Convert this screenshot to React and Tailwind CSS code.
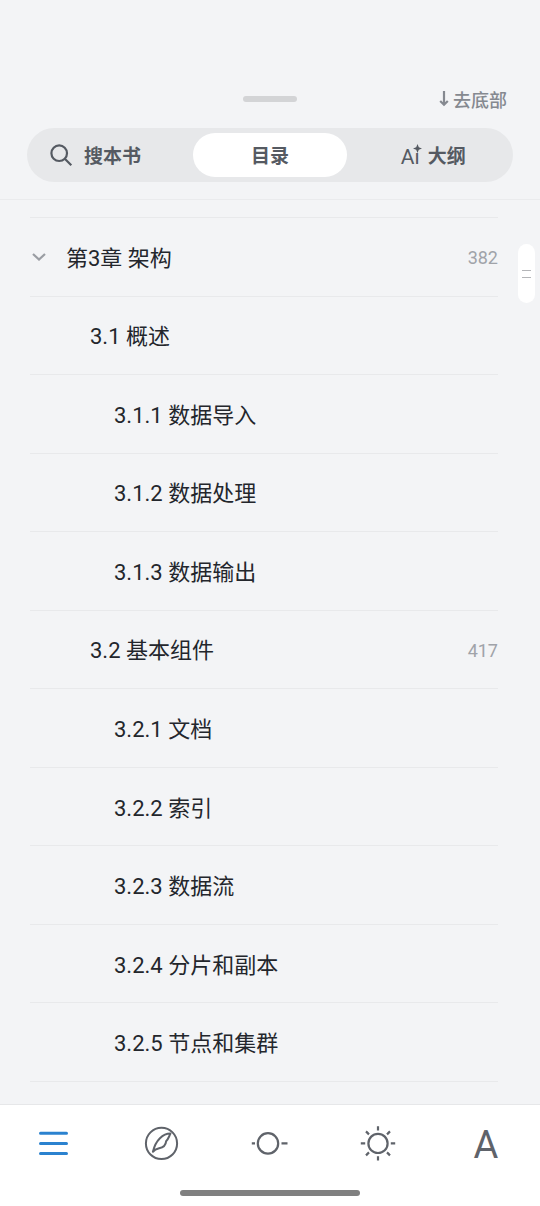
import React, { useState } from "react";

const CHAPTERS = [
  { title: "第3章 架构", level: 0, page: 382 },
  { title: "3.1 概述", level: 1 },
  { title: "3.1.1 数据导入", level: 2 },
  { title: "3.1.2 数据处理", level: 2 },
  { title: "3.1.3 数据输出", level: 2 },
  { title: "3.2 基本组件", level: 1, page: 417 },
  { title: "3.2.1 文档", level: 2 },
  { title: "3.2.2 索引", level: 2 },
  { title: "3.2.3 数据流", level: 2 },
  { title: "3.2.4 分片和副本", level: 2 },
  { title: "3.2.5 节点和集群", level: 2 },
];

const INDENT = ["pl-0", "pl-[60px]", "pl-[84px]"];

const SearchIcon = () => (
  <svg width="24" height="24" viewBox="0 0 24 24" fill="none" stroke="currentColor" strokeWidth="2.2" aria-hidden="true">
    <circle cx="10.2" cy="10.2" r="7.8" />
    <path d="M15.8 15.8 22.3 22.3" />
  </svg>
);

const ArrowDownIcon = () => (
  <svg width="10" height="18" viewBox="0 0 10 18" fill="none" stroke="currentColor" strokeWidth="2.2" aria-hidden="true">
    <path d="M5 1V15M1.2 11 5 14.8 8.8 11" />
  </svg>
);

const ChevronIcon = () => (
  <svg width="18" height="18" viewBox="0 0 18 18" fill="none" stroke="currentColor" strokeWidth="2.2" aria-hidden="true">
    <path d="M3 6 9 11.6 15 6" />
  </svg>
);

// dotless i: the four-point spark takes the place of its dot
const AiMark = () => (
  <span className="relative pt-[3px] text-[21px] leading-6 font-normal">
    Aı
    <svg className="absolute -right-[2px] top-[2px]" width="9" height="9" viewBox="0 0 9 9" fill="currentColor" aria-hidden="true">
      <path d="M4.5 0 5.8 3.2 9 4.5 5.8 5.8 4.5 9 3.2 5.8 0 4.5 3.2 3.2Z" />
    </svg>
  </span>
);

const MenuIcon = () => (
  <svg width="36" height="36" viewBox="0 0 36 36" fill="none" stroke="currentColor" strokeWidth="3" strokeLinecap="round" aria-hidden="true">
    <path d="M4.5 8.3H30.5M4.5 18.4H30.5M4.5 28.5H30.5" />
  </svg>
);

const CompassIcon = () => (
  <svg width="36" height="36" viewBox="0 0 36 36" fill="none" stroke="currentColor" strokeWidth="2" strokeLinejoin="round" aria-hidden="true">
    <circle cx="17.5" cy="18.4" r="15.6" />
    <path d="M26.5 8.6C19 8.6 11.7 14.9 8.9 26.8 10.7 24.6 12.3 24.1 15.1 23.3 19 22.4 21.8 20.2 22.1 16.3 24.3 14.2 24.9 11.6 26.5 8.6Z" />
  </svg>
);

const ProgressIcon = () => (
  <svg width="38" height="36" viewBox="0 0 38 36" fill="none" stroke="currentColor" strokeWidth="2.2" aria-hidden="true">
    <circle cx="17" cy="18.4" r="10.2" />
    <path d="M.8 18.4H4M30.5 18.4H36.5" />
  </svg>
);

const SunIcon = () => (
  <svg width="36" height="36" viewBox="0 0 36 36" fill="none" stroke="currentColor" strokeWidth="2.2" aria-hidden="true">
    <circle cx="18" cy="18.4" r="9.6" />
    <path d="M18 1.2V5.6M18 31.2V35.6M.8 18.4H5.2M30.8 18.4H35.2M6 6.4 9 9.4M27 27.4 30 30.4M6 30.4 9 27.4M27 9.4 30 6.4" />
  </svg>
);

const TABS = [
  { id: "search", label: "搜本书", icon: <SearchIcon />, className: "justify-start gap-[11px] pl-[17px]" },
  { id: "toc", label: "目录", className: "justify-center" },
  { id: "outline", label: "大纲", icon: <AiMark />, className: "justify-center gap-2 pl-1" },
];

const TOOLS = [
  { id: "menu", label: "目录", icon: <MenuIcon /> },
  { id: "explore", label: "探索", icon: <CompassIcon /> },
  { id: "progress", label: "进度", icon: <ProgressIcon /> },
  { id: "light", label: "亮度", icon: <SunIcon /> },
  { id: "font", label: "字体", icon: <span className="pt-[3px] text-[38px] leading-9">A</span> },
];

export default function App() {
  const [tab, setTab] = useState("toc");
  const [tool, setTool] = useState("menu");

  return (
    <div
      lang="zh-CN"
      className="relative flex min-h-screen flex-col bg-[#f3f4f6] font-[Roboto,'Noto_Sans_CJK_SC',sans-serif] text-[#23262c]"
    >
      <header className="border-b border-[#eaebed] px-[27px] pt-[87px] pb-[17px]">
        <div className="grid h-6 grid-cols-3 items-center">
          <span className="col-start-2 h-[6px] w-[54px] justify-self-center rounded-full bg-[#d3d4d6]" />
          <button
            type="button"
            className="flex cursor-pointer items-center gap-1 justify-self-end pr-[6px] text-[18px] leading-5 font-medium text-[#858990]"
          >
            <ArrowDownIcon />
            <span className="pt-[3px]">去底部</span>
          </button>
        </div>

        <div role="tablist" className="mt-[17px] grid h-[54px] grid-cols-3 gap-2 rounded-full bg-[#e7e8ea] p-[5px]">
          {TABS.map((t) => (
            <button
              key={t.id}
              type="button"
              role="tab"
              aria-selected={tab === t.id}
              onClick={() => setTab(t.id)}
              className={`flex cursor-pointer items-center rounded-full text-[19px] leading-6 font-bold text-[#555a62] ${t.className} ${
                tab === t.id ? "bg-white" : ""
              }`}
            >
              {t.icon}
              <span className="pt-[3px]">{t.label}</span>
            </button>
          ))}
        </div>
      </header>

      <main className="flex flex-1 flex-col pt-[17px] pr-[42px] pb-[22px] pl-[30px]">
        <ul className="grid flex-1 auto-rows-fr border-t border-[#e8e9eb]">
          {CHAPTERS.map((c) => (
            <li key={c.title} className="flex min-h-16 border-b border-[#e8e9eb]">
              <a href="#" className={`flex flex-1 items-center ${INDENT[c.level]}`}>
                {c.level === 0 && (
                  <span className="w-9 text-[#9a9da3]">
                    <ChevronIcon />
                  </span>
                )}
                <span className="flex-1 pt-1 text-[22px] leading-8">{c.title}</span>
                {c.page && <span className="pt-[3px] text-[18px] leading-8 text-[#a0a3a9]">{c.page}</span>}
              </a>
            </li>
          ))}
        </ul>
      </main>

      {/* fast-scroll grip, floats over the list */}
      <button
        type="button"
        aria-label="快速滚动"
        className="absolute top-[244px] right-[5px] flex h-[59px] w-[17px] cursor-pointer flex-col items-center justify-center gap-[6px] rounded-full bg-white"
      >
        <span className="h-px w-[9px] bg-[#b4b5b8]" />
        <span className="h-px w-[9px] bg-[#b4b5b8]" />
      </button>

      <footer className="border-t border-[#e6e7e9] bg-white pt-[13px] pb-[10px]">
        <nav className="grid h-[50px] grid-cols-5">
          {TOOLS.map((t) => (
            <button
              key={t.id}
              type="button"
              aria-label={t.label}
              onClick={() => setTool(t.id)}
              className={`flex cursor-pointer items-center justify-center ${
                tool === t.id ? "text-[#2b82cf]" : "text-[#5f636a]"
              }`}
            >
              {t.icon}
            </button>
          ))}
        </nav>
        <div className="mx-auto mt-[22px] h-[6px] w-1/3 rounded-full bg-[#808080]" />
      </footer>
    </div>
  );
}
